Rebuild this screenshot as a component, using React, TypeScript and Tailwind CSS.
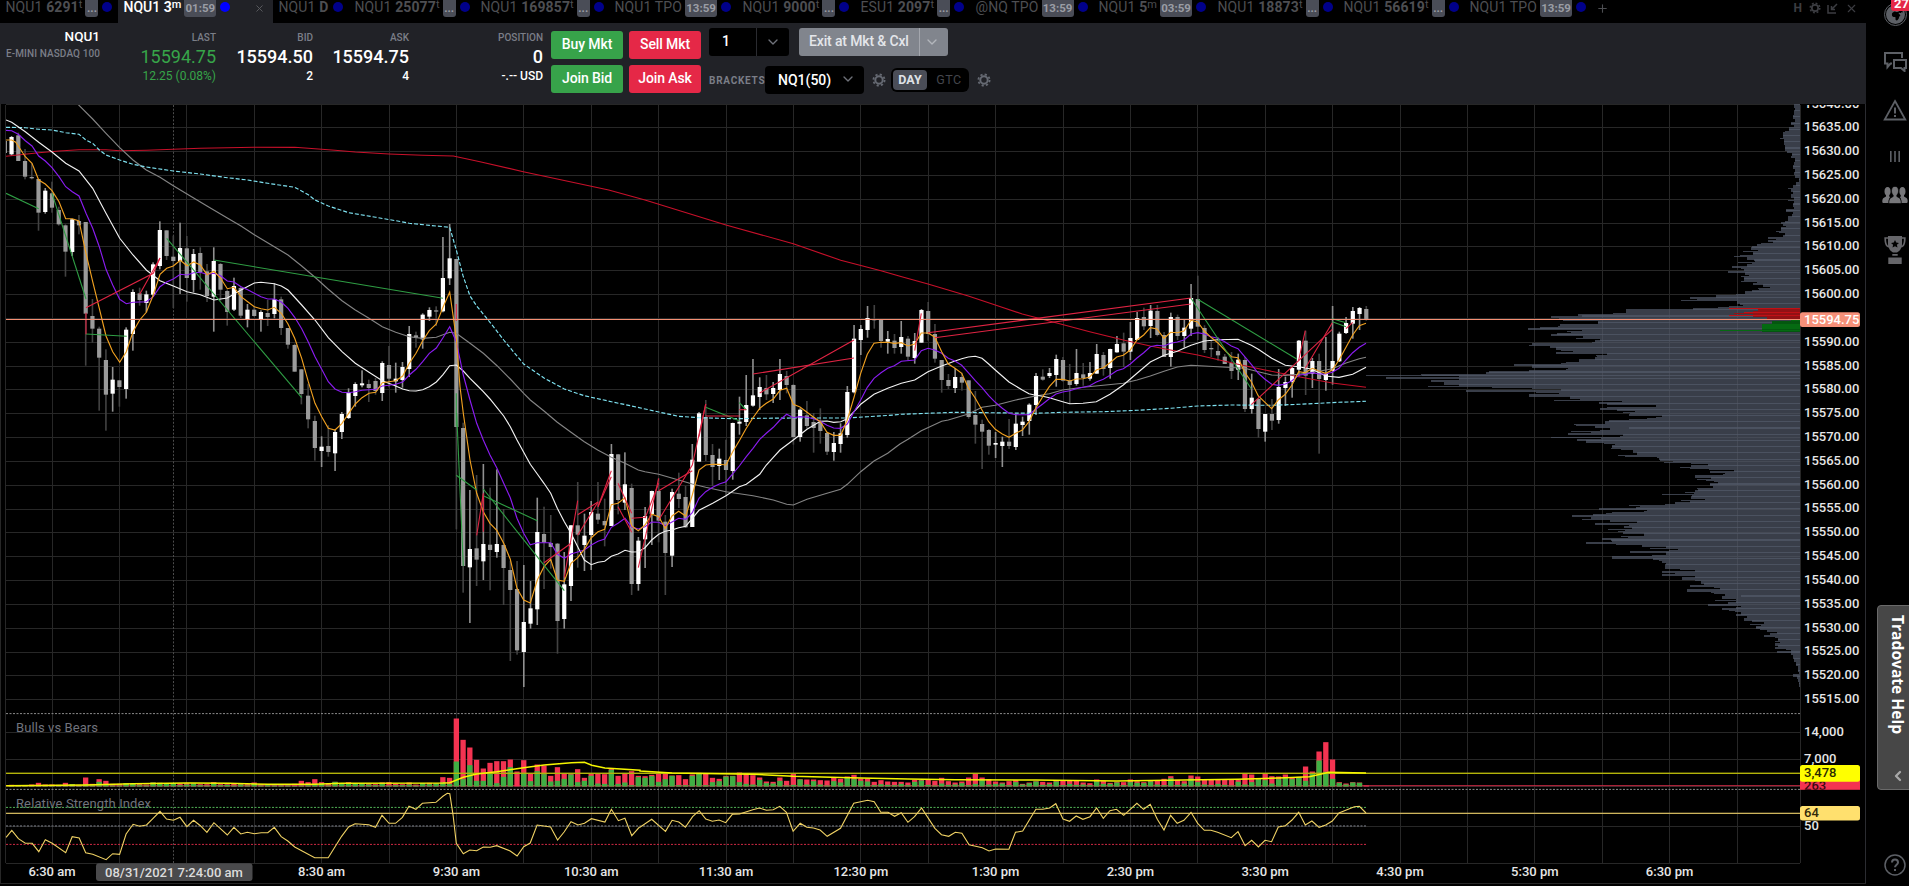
import React from "react";
import { ChevronDown, ChevronLeft, Plus, X } from "lucide-react";
import { FaEarthAfrica } from "react-icons/fa6";

/* ---------- tabs ---------- */

type Tab = {
  sym: string;
  size?: string;
  unit?: string;
  badge?: string;
  width: string;
  active?: boolean;
};

const tabs: Tab[] = [
  { sym: "NQU1", size: "6291", unit: "t", badge: "...", width: "w-[118px]" },
  { sym: "NQU1", size: "3", unit: "m", badge: "01:59", width: "w-[155px]", active: true },
  { sym: "NQU1", size: "D", width: "w-[76px]" },
  { sym: "NQU1", size: "25077", unit: "t", badge: "...", width: "w-[126px]" },
  { sym: "NQU1", size: "169857", unit: "t", badge: "...", width: "w-[134px]" },
  { sym: "NQU1 TPO", badge: "13:59", width: "w-[128px]" },
  { sym: "NQU1", size: "9000", unit: "t", badge: "...", width: "w-[118px]" },
  { sym: "ESU1", size: "2097", unit: "t", badge: "...", width: "w-[115px]" },
  { sym: "@NQ TPO", badge: "13:59", width: "w-[123px]" },
  { sym: "NQU1", size: "5", unit: "m", badge: "03:59", width: "w-[119px]" },
  { sym: "NQU1", size: "18873", unit: "t", badge: "...", width: "w-[126px]" },
  { sym: "NQU1", size: "56619", unit: "t", badge: "...", width: "w-[126px]" },
  { sym: "NQU1 TPO", badge: "13:59", width: "w-[128px]" },
];

const TabItem = ({ tab }: { tab: Tab }) => (
  <div
    className={`${tab.width} flex h-[23px] shrink-0 items-start pl-[5.5px] text-[14px] leading-[15px] whitespace-nowrap ${
      tab.active ? "bg-[#212227] text-white" : "text-[#4d4e52]"
    }`}
  >
    <span className={`flex items-start ${tab.active ? "font-medium" : "tracking-[0.12px]"}`}>
      <span className="whitespace-pre">
        {tab.sym}
        {tab.size && <b className="font-bold"> {tab.size}</b>}
      </span>
      {tab.unit && <span className="text-[11px] leading-[9px]">{tab.unit}</span>}
    </span>
    {tab.badge && (
      <span
        className={`ml-[3px] flex h-[17px] items-end justify-center rounded-b-[3px] bg-[#4a4d57] pb-[1px] text-[11.5px] leading-[15px] font-bold text-[#9a9da5] ${
          tab.badge === "..." ? "w-[13px]" : "w-[32px]"
        }`}
      >
        {tab.badge}
      </span>
    )}
    <span
      className={`mt-[2px] size-[10px] rounded-full ${
        tab.badge ? "ml-[4px]" : "ml-[5px]"
      } ${tab.active ? "bg-[#0000ff]" : "bg-[#00008a]"}`}
    />
    {tab.active && (
      <X className="mt-[3px] mr-[8px] ml-auto text-[#5d5e62]" size={11} />
    )}
  </div>
);

const Gear = ({ className = "" }: { className?: string }) => (
  <svg className={className} width="14" height="14" viewBox="0 0 14 14" fill="none" stroke="currentColor">
    <circle cx="7" cy="7" r="3.7" strokeWidth="2" />
    <circle cx="7" cy="7" r="5.6" strokeWidth="1.8" strokeDasharray="2.2 2.198" />
  </svg>
);

/* ---------- order header ---------- */

const Quote = ({
  label,
  value,
  sub,
  width,
  tone = "font-medium text-white",
}: {
  label: string;
  value: string;
  sub: string;
  width: string;
  tone?: string;
}) => (
  <div className={`${width} flex flex-col items-end pt-[9px]`}>
    <span className="text-[10px] leading-[11px] font-medium text-[#7b7e87]">{label}</span>
    <span className={`mt-[2px] text-[18px] leading-[24px] ${tone}`}>{value}</span>
    <span className={`text-[12px] leading-[15px] ${tone}`}>{sub}</span>
  </div>
);

const OrderButton = ({ label, tone }: { label: string; tone: string }) => (
  <button
    className={`${tone} h-[28px] w-[72px] rounded-[3px] pb-[1px] text-[14px] font-medium tracking-[-0.1px] whitespace-nowrap text-white`}
  >
    {label}
  </button>
);

const OrderHeader = () => (
  <div className="flex h-[81px] w-[1866px] bg-[#212227]">
    <div className="flex w-[100px] flex-col items-end pt-[6px]">
      <span className="text-[13.5px] leading-[15px] font-medium text-white">NQU1</span>
      <span className="mt-[4px] text-[10px] leading-[11px] font-medium tracking-[0.1px] whitespace-nowrap text-[#7b7e87]">
        E-MINI NASDAQ 100
      </span>
    </div>
    <Quote label="LAST" value="15594.75" sub="12.25 (0.08%)" width="w-[116px]" tone="text-[#37a549]" />
    <Quote label="BID" value="15594.50" sub="2" width="w-[97px]" />
    <Quote label="ASK" value="15594.75" sub="4" width="w-[96px]" />
    <Quote label="POSITION" value="0" sub="-.-- USD" width="w-[134px]" />

    <div className="ml-[8px] grid w-[150px] grid-cols-2 content-start gap-x-[6px] gap-y-[6px] pt-[8px]">
      <OrderButton label="Buy Mkt" tone="bg-[#37a34a]" />
      <OrderButton label="Sell Mkt" tone="bg-[#e52847]" />
      <OrderButton label="Join Bid" tone="bg-[#37a34a]" />
      <OrderButton label="Join Ask" tone="bg-[#e52847]" />
    </div>

    <div className="ml-[8px] flex flex-col gap-[10px] pt-[5px]">
      <div className="flex gap-[10px]">
        <div className="flex h-[28px] w-[80px] rounded-[3px] bg-black text-[14px] font-medium text-white">
          <span className="w-[47px] pl-[13px] leading-[27px]">1</span>
          <span className="flex flex-1 items-center justify-center border-l border-[#2a2b30] text-[#6f727a]">
            <ChevronDown size={16} />
          </span>
        </div>
        <div className="flex h-[28px] w-[149px] rounded-[3px] bg-[#81858d] text-[14px] font-medium text-[#e4e6ea]">
          <span className="w-[120px] pl-[10px] leading-[26px] tracking-[-0.15px] whitespace-nowrap">Exit at Mkt &amp; Cxl</span>
          <span className="flex w-[29px] items-center border-l border-[#a3a6ad] pl-[4px] text-[#b3b6bc]">
            <ChevronDown size={16} />
          </span>
        </div>
      </div>
      <div className="flex items-center">
        <span className="w-[56px] text-[10px] font-bold tracking-[0.75px] text-[#7b7e87]">
          BRACKETS
        </span>
        <div className="flex h-[28px] w-[99px] items-center justify-between rounded-[4px] bg-black pr-[8px] pl-[13px] text-[14px] font-medium text-white">
          NQ1(50)
          <ChevronDown className="mb-[2px] text-[#6f727a]" size={16} />
        </div>
        <Gear className="ml-[8px] text-[#666a73]" />
        <div className="ml-[5px] flex h-[24px] w-[78px] items-center rounded-[6px] bg-black p-[2px] text-[12.5px]">
          <span className="flex h-[20px] w-[34px] items-center justify-center rounded-[4px] bg-[#4a4d57] font-bold text-[#dfe1e6]">
            DAY
          </span>
          <span className="flex-1 pl-[4px] text-center tracking-[0.5px] text-[#44464c]">GTC</span>
        </div>
        <Gear className="ml-[8px] text-[#666a73]" />
      </div>
    </div>
  </div>
);

/* ---------- chart geometry ---------- */

const LEFT = 6;
const RIGHT = 1800;
const OPEN_X = 456.4; // 9:30 am
const STEP = 6.74; // one 3 minute bar
const barX = (i: number) => OPEN_X + i * STEP;

// a chunk of a series: origin x, origin y, "x,y x,y ..." in chunk units
type Chunk = [number, number, string];

const toPoints = (chunks: Chunk[], sx = 3, sy = 3) =>
  chunks
    .map(([ox, oy, s]) =>
      s
        .trim()
        .split(/\s+/)
        .map((p) => {
          const [x, y] = p.split(",").map(Number);
          return `${(ox + x / sx).toFixed(1)},${(oy + y / sy).toFixed(1)}`;
        })
        .join(" ")
    )
    .join(" ");

/* candles: high, body top, body bottom, low, u|d */
const candles: { from: number; top: number; rows: string }[] = [
  {
    from: -66,
    top: 100,
    rows: `108,111,163,168,u 98,106,183,183,d 147,183,230,238,d 190,231,234,238,d 237,237,338,392,d 264,272,336,341,u
    245,280,323,338,d 320,330,373,377,d 373,376,455,530,d 357,358,456,468,u 345,363,376,403,d 366,366,641,797,d
    597,648,686,728,d 680,686,773,932,d 748,780,884,992,d 801,839,881,935,u 840,841,861,920,d 682,689,867,896,u
    568,576,702,752,u 563,580,600,617,d 572,583,609,637,u 487,493,584,591,u 364,390,498,508,u 391,391,468,480,d
    407,470,483,624,d 368,444,483,582,u 408,445,534,605,d 447,462,540,577,u 442,459,516,569,d 492,514,588,606,d
    442,483,590,695,u 489,492,569,602,d 569,573,636,677,d 533,558,629,633,u 558,564,647,654,d 612,629,657,682,u
    618,629,648,650,d 631,636,657,695,u 600,639,651,678,d 550,598,642,655,u 590,598,684,705,d 684,684,734,746,d
    731,735,815,815,d 807,808,882,913,d 851,887,958,985,d 947,963,1044,1082,d 1009,1040,1053,1101,u 976,1038,1056,1070,d
    988,996,1060,1113,u 936,942,996,1017,u 865,878,954,957,u 847,852,888,920,u 811,850,856,862,u 839,852,864,906,d
    834,843,873,884,d 784,789,879,903,u 738,795,836,862,d 788,836,844,878,u 786,801,840,863,u 678,702,807,831,u
    695,706,713,743,d 640,644,718,746,u 622,630,650,663,u 619,631,634,678,d 411,534,634,637,u 372,475,535,555,u`,
  },
  {
    from: 0,
    top: 200,
    rows: `177,177,681,988,d 668,684,1098,1178,d 870,1047,1102,1269,u 825,1045,1079,1158,d 792,1032,1084,1140,u
    863,1034,1050,1171,d 808,1032,1056,1073,u 927,1035,1104,1215,d 1082,1110,1170,1383,d 1083,1167,1351,1364,d
    1095,1266,1356,1461,u 1143,1225,1271,1286,u 893,996,1228,1275,u 920,1002,1028,1167,d 945,1029,1041,1106,d
    1029,1031,1263,1361,d 1056,1153,1257,1286,u 975,976,1158,1203,u 846,976,1004,1103,d 941,1007,1035,1113,u
    903,936,1005,1110,u 846,941,959,972,d 896,963,976,1039,d 732,762,978,978,u 762,763,900,943,d 757,853,908,930,u
    851,864,1152,1185,d 1011,1022,1152,1172,u 921,948,1018,1104,u 872,873,942,1035,u 835,873,962,1027,d 945,965,1059,1185,d
    866,876,1067,1101,u 818,881,897,924,d 858,891,982,984,d 732,779,981,981,u 636,640,785,785,u 600,651,765,783,d
    732,765,801,858,d 746,776,798,840,u 719,780,810,888,d 668,669,813,839,u 590,665,671,704,u 525,615,666,678,u
    477,586,617,620,u 532,561,591,630,u 525,564,583,600,d 546,564,582,609,u 477,522,570,600,u 513,528,555,580,d
    552,555,711,734,d 625,629,711,725,u 603,646,678,686,d 639,666,684,758,d 625,666,693,731,d 695,699,755,765,d
    696,729,756,782,u 670,700,732,758,u 558,576,705,713,u 375,416,577,580,u 375,387,420,465,u 318,354,390,413,u
    315,357,361,386,d 357,360,423,443,d 393,417,425,461,u 402,422,444,461,d 363,411,441,461,u`,
  },
  {
    from: 67,
    top: 260,
    rows: `228,236,290,301,d 219,243,294,311,u 147,150,248,248,u 126,153,222,242,d 192,222,296,308,d 300,300,360,398,d
    342,360,378,387,d 324,351,384,399,u 338,351,368,392,d 361,361,471,476,d 393,465,494,551,d 479,492,515,627,d
    507,510,557,584,d 516,549,554,594,u 530,545,558,621,u 477,545,558,567,d 460,491,561,570,u 470,485,495,528,u
    430,434,483,524,u 339,348,435,465,u 328,350,359,362,d 324,339,348,354,u 284,297,345,380,u 291,300,362,365,d
    312,362,375,431,d 267,339,372,377,u 309,343,354,377,d 306,339,356,362,u 252,282,341,341,u 276,285,327,347,d
    266,267,324,356,u 228,252,277,278,u 218,250,275,321,d 186,234,275,300,u 156,174,240,240,u 143,171,199,210,d
    135,152,198,234,u 135,153,225,229,d 216,225,291,291,d 158,171,291,320,u 164,171,228,240,d 180,203,228,263,u
    72,114,206,228,u 47,117,200,240,d 196,204,270,279,d 240,264,267,291,d 231,273,286,302,d 282,290,312,312,d
    276,309,333,357,d 281,299,329,360,u 291,300,447,456,d 341,413,447,461,u 415,417,507,533,d 462,462,515,545,u
    417,462,482,510,d 327,381,480,491,u 350,366,384,438,u 318,324,366,413,u 240,242,329,350,u 212,242,347,405,d
    294,303,341,384,u 281,303,357,581,d 231,342,360,392,u 138,303,333,374,u 215,221,304,306,u 171,189,219,222,u
    141,153,191,236,u 141,144,162,210,u 138,147,178,182,d`,
  },
];

const A = (s: string): Chunk => [0, 100, s];
const B = (s: string): Chunk => [440, 200, s];
const C = (s: string): Chunk => [900, 260, s];

const overlays: { color: string; dash?: string; chunks: Chunk[] }[] = [
  {
    color: "#c8102a",
    chunks: [
      A("18,169 116,158 177,153 237,149 318,149 359,152 439,151 520,148 601,145 682,143 763,142 884,142 925,145 1005,151 1066,156 1167,162 1268,166 1360,168 1440,185 1570,215 1826,270"),
      B("615,0 858,75 1060,131 1202,181 1323,212"),
      C("0,49 84,72 205,108 286,135 367,162 448,183 569,215 670,240 751,258 812,270 893,285 1014,313 1095,330 1196,350 1297,369 1398,382"),
    ],
  },
  {
    color: "#848484",
    chunks: [
      A("235,14 278,57 318,100 359,143 399,180 439,210 480,232 520,257 561,282 621,318 682,354 723,378 763,404 823,440 864,465 905,498 945,532 985,568 1026,602 1066,630 1107,655 1147,680 1187,697 1228,710 1268,715 1309,712 1349,697"),
      B("49,400 90,430 130,460 171,497 211,537 251,580 271,600 312,633 352,667 393,697 433,725 473,750 514,772 555,790 595,810 615,815 656,823 716,840 757,852 797,862 858,875 939,887 1000,900 1040,913 1060,915 1101,898 1161,880 1202,868 1222,853 1262,815 1302,783 1343,760 1372,738"),
      C("0,552 24,538 64,512 125,484 145,480 205,462 246,442 286,436 347,420 407,408 448,401 488,390 549,382 610,376 670,370 711,360 751,348 792,334 832,321 873,316 953,320 1034,325 1075,335 1115,345 1156,346 1196,343 1257,334 1297,326 1338,309 1378,296 1398,292"),
    ],
  },
  {
    color: "#7fe3f2",
    dash: "4 2",
    chunks: [
      A("18,82 76,83 116,88 156,90 197,98 237,103 258,120 278,130 298,150 318,165 359,180 399,193 439,201 520,213 601,222 682,233 743,240 803,250 884,262 925,284 945,300 985,318 1046,338 1127,352 1187,362 1228,370 1309,378 1349,382 1369,450 1389,527"),
      B("90,288 110,318 150,367 191,420 251,492 312,534 373,567 433,587 514,605 575,618 656,636 716,649 777,653 878,656 960,655 1060,654 1222,654 1283,650 1363,645"),
      C("0,463 84,460 165,457 407,460 488,457 610,455 711,451 812,445 893,438 994,435 1115,436 1196,433 1257,430 1317,427 1398,424"),
    ],
  },
  {
    color: "#f2f2f2",
    chunks: [
      A("18,60 35,67 76,95 116,127 156,156 197,190 237,213 278,265 318,340 359,415 399,465 439,510 480,542 520,558 561,575 601,584 642,600 682,594 723,570 763,549 783,547 823,551 844,558 864,570 905,615 945,660 985,713 1026,755 1066,790 1107,817 1147,842 1187,858 1208,867 1228,872 1248,873 1268,869 1288,860 1309,846 1329,824 1349,797"),
      B("49,495 70,513 90,535 110,555 130,575 150,597 171,623 191,648 211,680 231,720 251,757 271,793 292,822 312,850 332,880 352,925 373,965 393,1000 413,1040 433,1080 454,1094 474,1087 494,1084 514,1069 534,1062 555,1051 575,1056 595,1055 615,1043 635,1020 656,1003 676,994 696,990 716,983 737,979 757,955 777,931 818,910 858,887 898,860 919,853 959,823 979,795 1000,772 1020,750 1060,720 1101,688 1141,664 1161,663 1181,667 1202,665 1222,656 1242,635 1262,613 1302,583 1343,565"),
      C("4,370 44,360 84,335 125,318 165,303 185,296 205,291 226,289 246,295 266,312 286,330 327,366 367,390 387,401 407,406 428,409 448,413 488,425 509,431 549,430 589,425 630,403 670,375 711,340 751,306 792,286 832,274 852,265 873,256 913,243 953,239 1014,238 1054,256 1075,268 1115,295 1156,316 1196,320 1237,328 1277,348 1317,352 1358,343 1398,322"),
    ],
  },
  {
    color: "#8a1cf0",
    chunks: [
      A("18,91 35,92 55,103 76,122 96,138 116,168 136,183 156,203 177,230 197,260 217,275 237,288 258,340 278,385 298,440 318,508 338,555 359,598 379,611 399,607 419,606 439,605 460,590 480,560 500,546 520,537 541,523 561,525 581,518 601,517 621,523 642,520 662,527 682,543 702,546 723,560 743,569 763,580 783,590 803,597 823,597 844,606 864,625 884,652 905,686 925,726 945,770 965,808 985,845 1005,867 1026,877 1046,878 1066,875 1086,871 1107,869 1127,868 1147,858 1167,856 1187,853 1208,846 1228,825 1248,808 1268,785 1288,760 1309,744 1329,713 1349,680"),
      B("49,425 70,525 90,600 110,670 130,720 150,765 171,805 191,850 211,893 231,955 251,1000 271,1034 292,1028 332,1028 352,1062 373,1075 393,1062 413,1056 433,1050 454,1035 474,1024 494,1017 514,982 534,970 555,955 575,981 595,987 615,980 635,966 656,967 676,977 696,966 716,955 737,958 757,938 777,895 797,875 818,862 838,852 858,845 878,822 898,798 919,770 939,745 959,718 979,700 1000,682 1020,660 1040,643 1060,653 1080,650 1101,652 1121,656 1141,664 1161,676 1181,684 1202,685 1222,672 1242,635 1262,600 1282,562 1302,535 1323,518 1343,505 1363,497"),
      C("4,304 44,300 64,272 84,265 104,270 125,280 145,295 165,303 185,316 205,338 226,362 246,383 266,407 286,427 307,445 327,460 347,464 387,464 407,448 428,432 448,416 468,402 488,396 509,392 529,386 569,377 589,366 610,358 630,346 650,332 670,326 691,312 711,294 731,278 751,260 771,256 792,258 812,250 832,246 852,240 873,222 893,218 913,222 933,230 953,235 974,245 994,258 1014,266 1034,290 1054,313 1075,340 1095,358 1115,373 1135,376 1156,372 1176,362 1196,346 1216,343 1237,338 1257,342 1277,342 1297,337 1317,325 1338,300 1358,278 1378,262 1398,250"),
    ],
  },
  {
    color: "#f0a020",
    chunks: [
      A("18,120 35,120 47,127 76,170 96,190 116,240 136,252 156,272 177,305 197,356 217,356 237,363 258,460 278,545 298,625 318,708 338,755 359,787 379,755 399,695 419,660 439,637 460,585 480,523 500,505 520,498 541,481 561,497 581,486 601,495 621,524 642,514 662,535 682,566 702,562 723,590 743,605 763,620 783,626 803,630 823,622 844,640 864,672 884,715 905,775 925,845 945,910 965,950 985,985 1005,990 1026,970 1046,940 1066,912 1086,893 1107,880 1127,877 1147,848 1167,845 1187,842 1208,828 1228,790 1248,760 1268,722 1288,692 1309,672 1329,622 1349,576"),
      B("49,415 60,560 70,640 90,780 110,880 130,935 150,970 171,992 191,1030 211,1078 231,1165 251,1200 271,1209 292,1140 312,1100 332,1078 352,1140 373,1144 393,1090 413,1073 433,1048 454,1013 474,995 494,988 514,914 534,910 555,893 575,978 595,992 615,975 635,943 656,950 676,985 696,948 716,934 737,948 757,885 777,810 797,795 818,793 838,793 858,795 878,755 898,722 919,685 939,653 959,625 979,610 1000,597 1020,571 1040,565 1060,613 1080,621 1101,637 1121,652 1141,665 1161,697 1181,706 1202,706 1222,660 1242,592 1262,520 1282,463 1302,430 1323,427 1343,427 1363,430"),
      C("4,248 24,258 44,252 64,219 84,219 104,231 125,275 145,312 165,325 185,340 205,383 226,415 246,450 266,485 286,508 307,522 327,532 347,520 367,510 387,485 407,445 428,410 448,380 468,358 488,358 509,363 529,357 549,356 569,351 589,330 610,323 630,308 650,291 670,286 691,270 711,240 731,225 751,203 771,207 792,235 812,217 832,218 852,213 873,181 893,186 913,213 933,232 953,248 974,270 994,290 1014,293 1034,337 1054,365 1075,408 1095,427 1115,446 1135,420 1156,403 1176,375 1196,335 1216,338 1237,325 1257,333 1277,340 1297,330 1317,300 1338,262 1358,225 1378,197 1398,190"),
    ],
  },
];

const greenMoves: Chunk[] = [
  A("18,280 116,326"), A("156,280 258,597"), A("258,702 380,709"), A("500,415 905,893"), A("642,480 1329,595"),
  B("49,580 49,680"), B("50,640 70,1098"), B("49,826 110,870"), B("130,887 292,962"), B("130,867 373,1172"), B("797,622 898,662"),
  B("898,608 919,630"), C("873,115 1054,386"), C("893,118 1190,297"), C("1297,176 1338,188"), C("1297,185 1338,200"),
];

const redMoves: Chunk[] = [
  A("258,623 460,520 480,474"), A("419,583 480,474"), A("258,638 258,703"), A("1369,612 1369,663"),
  B("110,1006 130,880 130,995"), B("312,1088 393,1030"), B("373,1133 413,902"), B("413,944 474,906"),
  B("413,1006 474,906"), B("474,920 514,812"), B("474,920 514,830"), B("534,850 575,940"), B("534,920 575,997"),
  B("575,955 615,952"), B("595,1103 656,835"), B("615,955 656,850"), B("656,872 757,812"), B("656,960 757,795 797,612"),
  B("777,710 797,612"), B("797,648 898,648"), B("898,629 919,629"), B("939,522 1242,474"), B("959,579 1242,420"),
  C("44,272 64,160"), C("84,218 873,114"), C("104,233 873,132"), C("1054,434 1297,208"), C("1196,300 1216,212"),
  C("1216,325 1297,188"), C("1338,206 1358,187"),
];

/* volume profile outline, "y,x" per row */
const profile: { top: number; rows: string }[] = [
  {
    top: 100,
    rows: `12,1232 22,1235 30,1234 45,1230 55,1235 65,1226 75,1232 82,1218 90,1207 96,1201 104,1202 111,1194 115,1205
    125,1203 135,1206 145,1207 152,1212 158,1227 168,1225 175,1235 185,1232 195,1230 205,1236 215,1233 225,1237 235,1247
    245,1240 255,1230 262,1217 268,1224 275,1230 282,1225 290,1232 297,1217 301,1234 310,1230 320,1233 328,1211 333,1231
    340,1228 348,1215 355,1217 362,1208 366,1195 370,1200 376,1210 382,1195 390,1180 395,1190 400,1207 406,1200 411,1158
    415,1180 419,1158 424,1172 428,1136 432,1125 437,1110 440,1074 443,1109 448,1128 453,1085 457,1113 462,1076 467,1060
    471,1098 476,1117 480,1120 485,1071 489,1110 493,1097 497,1052 501,1078 507,1088 512,1040 516,1090 522,1103 527,1080
    532,1087 540,1080 545,1125 550,1115 554,1144 558,1165 562,1130 567,1133 571,1110 575,1092 580,1066 583,956 586,1007
    590,930 594,952 598,905 601,968 604,1068 608,1076 612,1085 616,1044 620,1012 623,940 626,803 629,745 633,746 637,707
    641,605 645,616 648,526 652,551 655,411 660,562 664,663 669,426 672,552 676,548 680,494 684,459 687,616 691,572
    695,586 699,543 703,527 707,620 712,599 716,670 720,655 724,645 728,470 733,463 738,525 743,541 748,556 751,590
    755,541 759,690 763,656 768,660 772,655 776,608 780,608 784,570 788,556 793,419 797,470 801,575 805,570 809,462
    812,345 816,337 820,148 824,152 827,258 831,46 836,258 838,176 842,176 847,214 851,260 855,169 858,355 862,470
    866,555 870,279 874,483 878,549 883,462 887,532 890,583 894,612 898,534 901,732 905,667 909,690 912,745 915,832
    919,690 923,669 927,718 931,770 934,735 938,757 941,752 944,848 948,833 952,805 956,752 960,695`,
  },
  {
    top: 420,
    rows: `0,695 5,684 10,592 14,600 18,655 22,752 25,697 29,670 31,586 34,643 38,577 42,735 46,728 51,527 55,673 58,602
    62,628 66,680 70,712 74,705 78,703 82,702 86,730 90,765 95,772 98,776 103,720 107,743 111,835 115,840 119,845 122,882
    125,855 127,933 131,982 135,935 138,901 142,930 147,987 149,1060 153,990 156,1032 160,1028 163,1040 166,944 170,993
    174,951 178,978 182,1000 185,1012 189,1000 191,990 195,886 198,998 202,950 206,955 210,944 214,915 218,943 222,850
    226,938 230,933 234,975 238,905 242,930 246,888 250,858 254,752 258,785 261,773 265,665 268,805 272,797 274,705
    278,687 282,648 287,588 291,642 295,618 300,698 305,778 309,655 313,752 317,738 320,762 324,692 328,743 331,720
    335,737 338,558 341,797 345,730 349,750 352,675 357,700 361,705 366,628 370,715 374,790 377,860 381,815 385,897
    389,870 394,757 398,860 402,770 405,820 409,705 413,822 418,842 423,850 428,860 431,828 434,858 438,795 441,858
    445,903 449,944 453,850 456,887 460,850 465,850 469,945 473,908 478,944 481,797 484,963 490,972 494,930 499,1002
    504,1018 509,922 513,993 517,1000 520,1032 525,1078 530,1024 535,1066 539,1003 542,1066 548,1042 552,983 556,1078
    560,1066 563,1024 568,1045 573,1062 577,1078 581,1064 585,1098 590,1098 595,1087 600,1110 605,1147 610,1105 615,1138
    620,1123 625,1135 630,1155 635,1185 640,1165 645,1147 650,1178 655,1187 660,1178 665,1192 670,1178 675,1187 680,1178
    685,1210 690,1225 694,1184 698,1225 705,1230 715,1232 725,1240 735,1245 745,1246 755,1247 763,1230 767,1241 775,1246
    785,1247 800,1251`,
  },
];

const profileRows = profile.flatMap(({ top, rows }) =>
  rows.trim().split(/\s+/).map((r) => {
    const [y, x] = r.split(",").map(Number);
    return { y: top + y / 3, x: 1370 + x / 2.909 };
  })
);

const TICK = 1.1915;

const profileBars = Array.from({ length: 489 }, (_, n) => {
  const y = 104.4 + n * TICK;
  let x = profileRows[0].x;
  for (const row of profileRows) {
    if (row.y > y + 0.4) break;
    x = row.x;
  }
  return { x, y };
});

/* total,bulls per bar in thirds of a pixel */
const volume = `5,3 4,3 4,2 6,2 11,4 6,3 6,4 5,3 11,4 7,7 5,3 27,6 8,4 22,14 17,6 8,3 8,3 10,10 9,9 7,4 6,3 12,12 11,11
9,9 10,10 9,4 10,6 9,8 7,4 7,3 13,10 7,4 7,5 8,3 7,6 7,3 12,8 7,3 7,4 7,3 7,3 6,3 8,2 17,3 13,4 22,8 13,9 10,3 14,14
9,9 13,8 8,8 8,8 8,6 7,4 12,8 13,3 9,4 7,4 12,6 6,3 10,10 11,7 9,9 28,12 26,8
204,75 140,22 117,64 80,17 54,17 71,42 76,10 76,29 81,58 45,0 79,41 38,16 66,46 63,37 32,15 58,17 40,23 38,36 52,13
26,17 38,32 38,9 37,8 54,50 32,8 38,12 46,4 32,28 31,26 35,31 38,14 39,22 33,32 34,4 22,4 36,32 41,39 38,4 26,13
23,16 32,30 32,31 42,13 38,8 34,6 27,20 15,10 14,9 27,17 17,3 39,5 22,21 21,6 21,16 19,6 18,3 28,16 23,12 30,27
35,22 24,17 24,15 14,4 19,7 15,5 14,4 14,8 12,4 20,14 20,18 22,5 17,3 26,9 16,5 12,6 15,10 27,4 38,8 27,19 22,6
15,8 12,9 16,4 19,13 8,6 12,10 16,15 14,5 12,7 17,15 18,4 19,8 17,5 12,6 10,4 21,15 16,8 11,8 14,12 13,4 21,13
16,11 13,10 17,15 17,6 23,4 31,25 20,5 16,9 33,24 30,13 20,6 20,4 20,8 20,5 20,3 20,14 38,6 36,13 25,22 39,19
31,9 30,22 36,28 28,22 29,26 60,17 45,40 105,78 133,44 81,23 13,11 9,6 13,12 12,11 3,0`
  .trim()
  .split(/\s+/)
  .map((v) => v.split(",").map(Number));

const volumeAverage = [
  toPoints([[0, 700, "15,257 210,255 326,251 458,249 560,250 656,253 771,253 837,250 1085,249 1102,248 1135,232 1168,222 1217,215 1283,203 1333,195 1400,188 1432,187 1450,196 1482,204 1568,211"]], 2.45),
  toPoints([[640, 700, "0,213 63,219 221,223 300,229 433,234 525,237 618,239 776,240 934,243 1066,240 1172,238 1265,233 1312,230 1350,217 1423,219"]], 1.96),
].join(" ");

const rsi = [
  toPoints([[0, 700, "15,412 29,391 45,416 62,430 79,430 95,455 111,419 128,430 161,458 177,410 194,414 210,458 227,463 260,479 276,461 293,463 309,402 326,373 342,379 359,375 375,355 392,334 408,357 425,361 441,352 458,380 474,361 491,377 507,397 524,368 557,405 573,382 590,402 606,397 623,401 640,398 656,398 672,382 689,410 705,423 722,441 771,473 804,473 837,409 854,381 870,371 903,374 920,382 936,346 953,370 969,370 986,352 1002,319 1019,328 1035,310 1068,307 1085,289 1096,280 1102,281 1110,346 1118,430 1135,461 1151,450 1168,452 1184,441 1201,442 1217,437 1250,453 1267,468 1283,440 1299,429 1316,375 1349,381 1366,420 1382,396 1399,365 1416,375 1432,370 1449,356 1482,366 1498,328 1515,362 1531,355 1548,407 1566,382"]], 2.45),
  toPoints([[640, 700, "0,382 23,358 50,394 63,361 76,366 89,382 103,350 116,332 129,357 142,364 155,360 168,368 181,343 195,342 221,329 234,324 248,331 261,329 274,319 287,337 300,394 314,370 327,382 340,384 353,390 367,409 393,385 419,310 446,301 459,305 472,337 486,337 499,349 512,338 525,367 538,350 552,324 578,385 591,404 605,409 618,397 631,400 645,434 671,443 684,453 697,447 723,448 736,397 750,393 763,360 776,328 789,328 803,324 815,311 829,357 842,364 855,348 868,358 882,350 895,324 908,355 921,332 934,328 948,346 974,310 987,328 1000,313 1014,358 1027,390 1040,346 1053,370 1066,361 1080,337 1093,370 1106,391 1119,391 1132,397 1159,413 1172,395 1186,437 1199,421 1212,441 1225,421 1238,425 1251,381 1265,377 1278,360 1291,337 1304,375 1317,363 1331,382 1344,375 1357,363 1370,339 1400,320 1410,319 1423,339"]], 1.96),
].join(" ");

const times = [
  "6:30 am", "", "8:30 am", "9:30 am", "10:30 am", "11:30 am", "12:30 pm",
  "1:30 pm", "2:30 pm", "3:30 pm", "4:30 pm", "5:30 pm", "6:30 pm",
];

/* resting orders around the last price: y, x, height */
const asks = [[308, 1045, 1], [309, 1130, 2], [311, 1115, 1], [312, 1088, 1], [313, 1060, 1], [314, 1115, 1], [315, 1045, 1], [316, 1115, 1], [317, 1155, 2]];
const bids = [[320, 1225, 1], [321, 1168, 3], [324, 1140, 5], [329, 1140, 1], [330, 1017, 1], [331, 1140, 1]];

const Dotted = ({ y, color, to = RIGHT, width = 1 }: { y: number; color: string; to?: number; width?: number }) => (
  <line x1={LEFT} x2={to} y1={y} y2={y} stroke={color} strokeWidth={width} strokeDasharray="2 1.5" />
);

const Tag = ({ y, h, fill, text, color, ty }: { y: number; h: number; fill: string; text: string; color: string; ty: number }) => (
  <>
    <rect x={RIGHT} y={y} width={60} height={h} rx={2.5} fill={fill} />
    <text x={1804} y={ty} fill={color} fontSize={13} fontWeight={500}>{text}</text>
  </>
);

const Chart = () => (
  <svg className="block font-[Roboto,sans-serif]" width="1866" height="782" viewBox="0 104 1866 782">
    <defs>
      <clipPath id="plot">
        <rect x={LEFT} y={105} width={RIGHT - LEFT} height={758} />
      </clipPath>
    </defs>
    <rect y={104} width={1866} height={782} fill="#000" />

    {/* grid */}
    <g stroke="#272727" strokeWidth={1} shapeRendering="crispEdges">
      {Array.from({ length: 26 }, (_, k) => (
        <line key={k} x1={52 + k * 67.4} x2={52 + k * 67.4} y1={105} y2={863} />
      ))}
      {Array.from({ length: 25 }, (_, k) => (
        <line key={k} x1={LEFT} x2={RIGHT} y1={127.8 + k * 23.83} y2={127.8 + k * 23.83} />
      ))}
      {[732.5, 759.5, 786.5, 826, 863].map((y) => (
        <line key={y} x1={LEFT} x2={RIGHT} y1={y} y2={y} />
      ))}
      <line x1={5.5} x2={5.5} y1={105} y2={863} />
      <line x1={1800.5} x2={1800.5} y1={105} y2={863} />
      <line x1={LEFT} x2={RIGHT} y1={104.5} y2={104.5} />
      <line x1={0.5} x2={0.5} y1={104} y2={884} />
      <line x1={1865.5} x2={1865.5} y1={104} y2={884} stroke="#2b2c31" />
      <line x1={0} x2={1866} y1={883.5} y2={883.5} />
    </g>
    <line x1={173.5} x2={173.5} y1={105} y2={863} stroke="#4c4c4c" strokeDasharray="2 1.6" />

    {/* volume profile */}
    <g fill="#545b6c" fillOpacity={0.68} shapeRendering="crispEdges">
      <rect x={1366} y={375} width={RIGHT - 1366} height={1} />
      {profileBars.map(({ x, y }, n) => (
        <rect key={n} x={x} y={y} width={Math.max(RIGHT - x, 0)} height={1.4} />
      ))}
    </g>
    <g shapeRendering="crispEdges">
      {asks.map(([y, x, h], n) => (
        <rect key={y} x={1370 + x / 2.909} y={y} width={430 - x / 2.909} height={h} fill={n % 3 === 0 ? "#c01116" : "#921215"} />
      ))}
      {bids.map(([y, x, h], n) => (
        <rect key={y} x={1370 + x / 2.909} y={y} width={430 - x / 2.909} height={h} fill={n % 2 === 0 ? "#056a12" : "#045710"} />
      ))}
    </g>

    {/* candles */}
    <g clipPath="url(#plot)">
      <rect x={5} y={141} width={2} height={12} fill="#999" />
      {candles.map(({ from, top, rows }) =>
        rows.trim().split(/\s+/).map((row, n) => {
          const [h, t, b, l, dir] = row.split(",");
          const y = (v: string) => top + Number(v) / 3;
          const up = dir === "u";
          const x = barX(from + n);
          return (
            <g key={from + n}>
              <rect x={x - 0.8} y={y(h)} width={1.6} height={y(l) - y(h)} fill={up ? "#909090" : "#424242"} />
              <rect x={x - 2.1} y={y(t)} width={4.2} height={Math.max(y(b) - y(t), 1.3)} fill={up ? "#fff" : "#9a9a9a"} />
            </g>
          );
        })
      )}

      {/* moving averages and vwap */}
      {overlays.map(({ color, dash, chunks }) => (
        <polyline key={color} points={toPoints(chunks)} fill="none" stroke={color} strokeWidth={1.15} strokeDasharray={dash} />
      ))}
      {greenMoves.map((m, n) => (
        <polyline key={n} points={toPoints([m])} fill="none" stroke="#2f9e44" strokeWidth={1.1} />
      ))}
      {redMoves.map((m, n) => (
        <polyline key={n} points={toPoints([m])} fill="none" stroke="#e02443" strokeWidth={1.1} />
      ))}
    </g>
    <rect x={LEFT} y={319} width={RIGHT - LEFT} height={1} fill="#f58f73" />

    {/* bulls vs bears */}
    <g fill="#70737c" fontSize={13}>
      <text x={16} y={732} textLength={82}>Bulls vs Bears</text>
      <text x={16} y={808} textLength={135}>Relative Strength Index</text>
    </g>
    <rect x={LEFT} y={785.2} width={RIGHT - LEFT} height={1} fill="#d12a45" />
    {volume.map(([total, bulls], n) => {
      const x = barX(n - 66) - 2.7;
      return (
        <g key={n}>
          <rect x={x} y={786.5 - total / 3} width={5.3} height={total / 3} fill="#f43351" />
          <rect x={x} y={786.5 - bulls / 3} width={5.3} height={bulls / 3} fill="#3fae43" />
        </g>
      );
    })}
    <rect x={LEFT} y={772.6} width={RIGHT - LEFT} height={1.4} fill="#b3b30a" />
    <polyline points={volumeAverage} fill="none" stroke="#f5f500" strokeWidth={1.5} />
    <Dotted y={713.6} color="#8a8a8a" />
    <Dotted y={789.4} color="#8a8a8a" />

    {/* rsi */}
    <Dotted y={807.4} color="#52b256" to={1366} />
    <Dotted y={826} color="#5c5f66" to={1366} width={1.5} />
    <Dotted y={844.4} color="#d12a45" to={1366} />
    <rect x={LEFT} y={812.7} width={RIGHT - LEFT} height={1.3} fill="#cdb45c" />
    <polyline points={rsi} fill="none" stroke="#f0d264" strokeWidth={1.1} />

    {/* price axis */}
    <g fill="#e6e6e6" fontSize={13} fontWeight={500}>
      <svg x={1801} y={105} width={64} height={30} viewBox="1801 105 64 30">
        <text x={1804} y={107.8}>15640.00</text>
      </svg>
      {Array.from({ length: 25 }, (_, k) =>
        k === 8 ? null : (
          <text key={k} x={1804} y={131.2 + k * 23.83}>{`${15635 - k * 5}.00`}</text>
        )
      )}
      <text x={1804} y={736.3}>14,000</text>
      <text x={1804} y={763.3}>7,000</text>
      <text x={1804} y={829.7}>50</text>
      {times.map((t, n) => (
        <text key={n} x={52 + n * 134.8} y={876} textAnchor="middle">{t}</text>
      ))}
    </g>
    <rect x={1800} y={780} width={60} height={9.8} fill="#f43351" />
    <svg x={1801} y={780} width={60} height={9.8} viewBox="1801 780 60 9.8">
      <text x={1804} y={789.6} fill="#3a0a12" fontSize={13} fontWeight={500}>263</text>
    </svg>
    <Tag y={312.3} h={14.8} fill="#f69079" text="15594.75" color="#fff" ty={323.5} />
    <Tag y={765} h={16.8} fill="#ffff00" text="3,478" color="#2a2a00" ty={777} />
    <Tag y={806} h={14.5} fill="#ffe06e" text="64" color="#33290a" ty={817} />
    <rect x={96} y={863.2} width={156.5} height={17.8} rx={3} fill="#4a4a4c" />
    <text x={174} y={877} fill="#dcdcdc" fontSize={13} fontWeight={500} textAnchor="middle">
      08/31/2021 7:24:00 am
    </text>
  </svg>
);

/* ---------- right rail ---------- */

const Rail = () => (
  <aside className="relative h-[886px] w-[43px] shrink-0 overflow-hidden bg-black text-[#5d6066]">
    <div className="flex flex-col items-center pt-[3px] pl-[15px]">
      <span className="flex size-[23px] items-center justify-center rounded-full border-[1.5px] border-[#5d6066]">
        <FaEarthAfrica size={19} />
      </span>
      <svg className="mt-[25px]" width="24" height="21" viewBox="0 0 24 21" fill="none" stroke="currentColor" strokeWidth="2">
        <path d="M9 12.5H7.5L4.5 16v-3.5H2V2h17v5" />
        <path d="M11 9h12v8h-1.5v3L18 17h-7z" />
      </svg>
      <svg className="mt-[26px]" width="24" height="23" viewBox="0 0 24 23" fill="none" stroke="currentColor" strokeWidth="1.8">
        <path d="M12 3 22.3 21.5H1.7z" />
        <path d="M12 9.5v6M12 17v2" strokeWidth="2" />
      </svg>
      <svg className="mt-[30px]" width="12" height="11" viewBox="0 0 12 11" fill="currentColor">
        <path d="M1 0h1.6v11H1zM5.2 0h1.6v11H5.2zM9.4 0H11v11H9.4z" />
      </svg>
      <svg className="mt-[24px] text-[#77777a]" width="28" height="19" viewBox="0 0 28 19" fill="currentColor">
        <path d="M3.500 5.500C3.500 2.500 4.700 1 6.600 1s3 1.500 3 4.500c0 1.600-.6 3-1.400 3.800v1.200l1 .6C8 12.400 7.600 14 7.600 17H2C1 17 1 13 2.500 12l2.500-1.500V9.300C4 8.500 3.500 7 3.500 5.500z" />
        <path d="M24.500 5.500C24.500 2.500 23.300 1 21.400 1s-3 1.500-3 4.500c0 1.600.6 3 1.400 3.800v1.200l-1 .6c1.200 1.300 1.600 2.900 1.600 5.900H26c1 0 1-4-.5-5L23 10.500V9.300c1-.8 1.500-2.300 1.500-3.800z" />
        <path d="M10.500 4.800C10.500 1.800 12 .4 14 .4s3.500 1.400 3.500 4.400c0 1.800-.7 3.500-1.700 4.300v1.400l2.600 1.500c1.300.8 1.800 3 1.800 5.500H7.800c0-2.500.5-4.700 1.800-5.500l2.600-1.500V9.100c-1-.8-1.700-2.500-1.700-4.300z" stroke="#000" strokeWidth=".6" />
      </svg>
      <svg className="mt-[31px] text-[#66666a]" width="22" height="28" viewBox="0 0 22 28">
        <path d="M1.200 2h4v7.500c0 1-1 1.500-2 .5-1.500-1.500-2-4-2-8zM20.800 2h-4v7.500c0 1 1 1.500 2 .5 1.500-1.500 2-4 2-8z" fill="none" stroke="currentColor" strokeWidth="1.700" />
        <path d="M4 0h14v7c0 5-2 8-5 9.500h-4C6 15 4 12 4 7z" fill="currentColor" />
        <path d="M8.300 18h5.400v1.700H8.300zM4.300 21.500h13.400V28H4.300z" fill="currentColor" />
        <path d="m11 4 1.200 2.600 2.800.3-2.100 1.900.6 2.800L11 10.200l-2.500 1.400.6-2.800L7 6.900l2.800-.3z" fill="#000" />
      </svg>
    </div>
    <span className="absolute top-0 left-[25px] flex h-[11px] w-[30px] items-end rounded-bl-[3px] bg-[#e52847] pl-[3px] text-[13px] leading-[15px] font-bold text-white">
      270
    </span>
    <div className="absolute top-[605px] left-[11px] flex h-[185px] w-[40px] flex-col items-start rounded-[4px] border border-[#6a6a6a] bg-[#474747] pt-[9px] pl-[7px] text-white">
      <span className="h-[119px] font-['Open_Sans',sans-serif] text-[15.6px] leading-[26px] font-bold whitespace-nowrap [writing-mode:vertical-rl]">
        Tradovate Help
      </span>
      <ChevronLeft className="mt-[34px] ml-[5px] text-[#a8a8a8]" size={16} strokeWidth={3.5} />
    </div>
    <svg className="absolute top-[854px] left-[18px]" width="22" height="22" viewBox="0 0 22 22" fill="none" stroke="currentColor" strokeWidth="1.5">
      <circle cx="11" cy="11" r="10" />
      <path d="M8 8.500c0-4 6-4 6 0 0 2.200-3 2.300-3 4.800M11 15v2" strokeWidth="2" />
    </svg>
  </aside>
);

const App = () => {
  return (
    <div className="flex h-[886px] w-[1909px] overflow-hidden bg-black font-[Roboto,sans-serif]">
      <main className="flex w-[1866px] shrink-0 flex-col">
        <nav className="flex h-[23px] overflow-hidden">
          {tabs.map((tab, n) => (
            <TabItem key={n} tab={tab} />
          ))}
          <Plus className="mt-[2px] ml-[4px] text-[#4d4e52]" size={13} />
          <div className="mr-[8px] ml-auto flex h-[16px] items-center gap-[6px] text-[#3c3d42]">
            <span className="text-[12px] font-bold">H</span>
            <Gear className="ml-px size-[12px]" />
            <svg width="11" height="11" viewBox="0 0 11 11" fill="none" stroke="currentColor" strokeWidth="1.5">
              <path d="M1 2v8h8M10 1 4.500 6.500M4.500 3v3.500H8" />
            </svg>
            <X size={13} className="ml-px" />
          </div>
        </nav>
        <OrderHeader />
        <Chart />
      </main>
      <Rail />
    </div>
  );
};

export default App;
